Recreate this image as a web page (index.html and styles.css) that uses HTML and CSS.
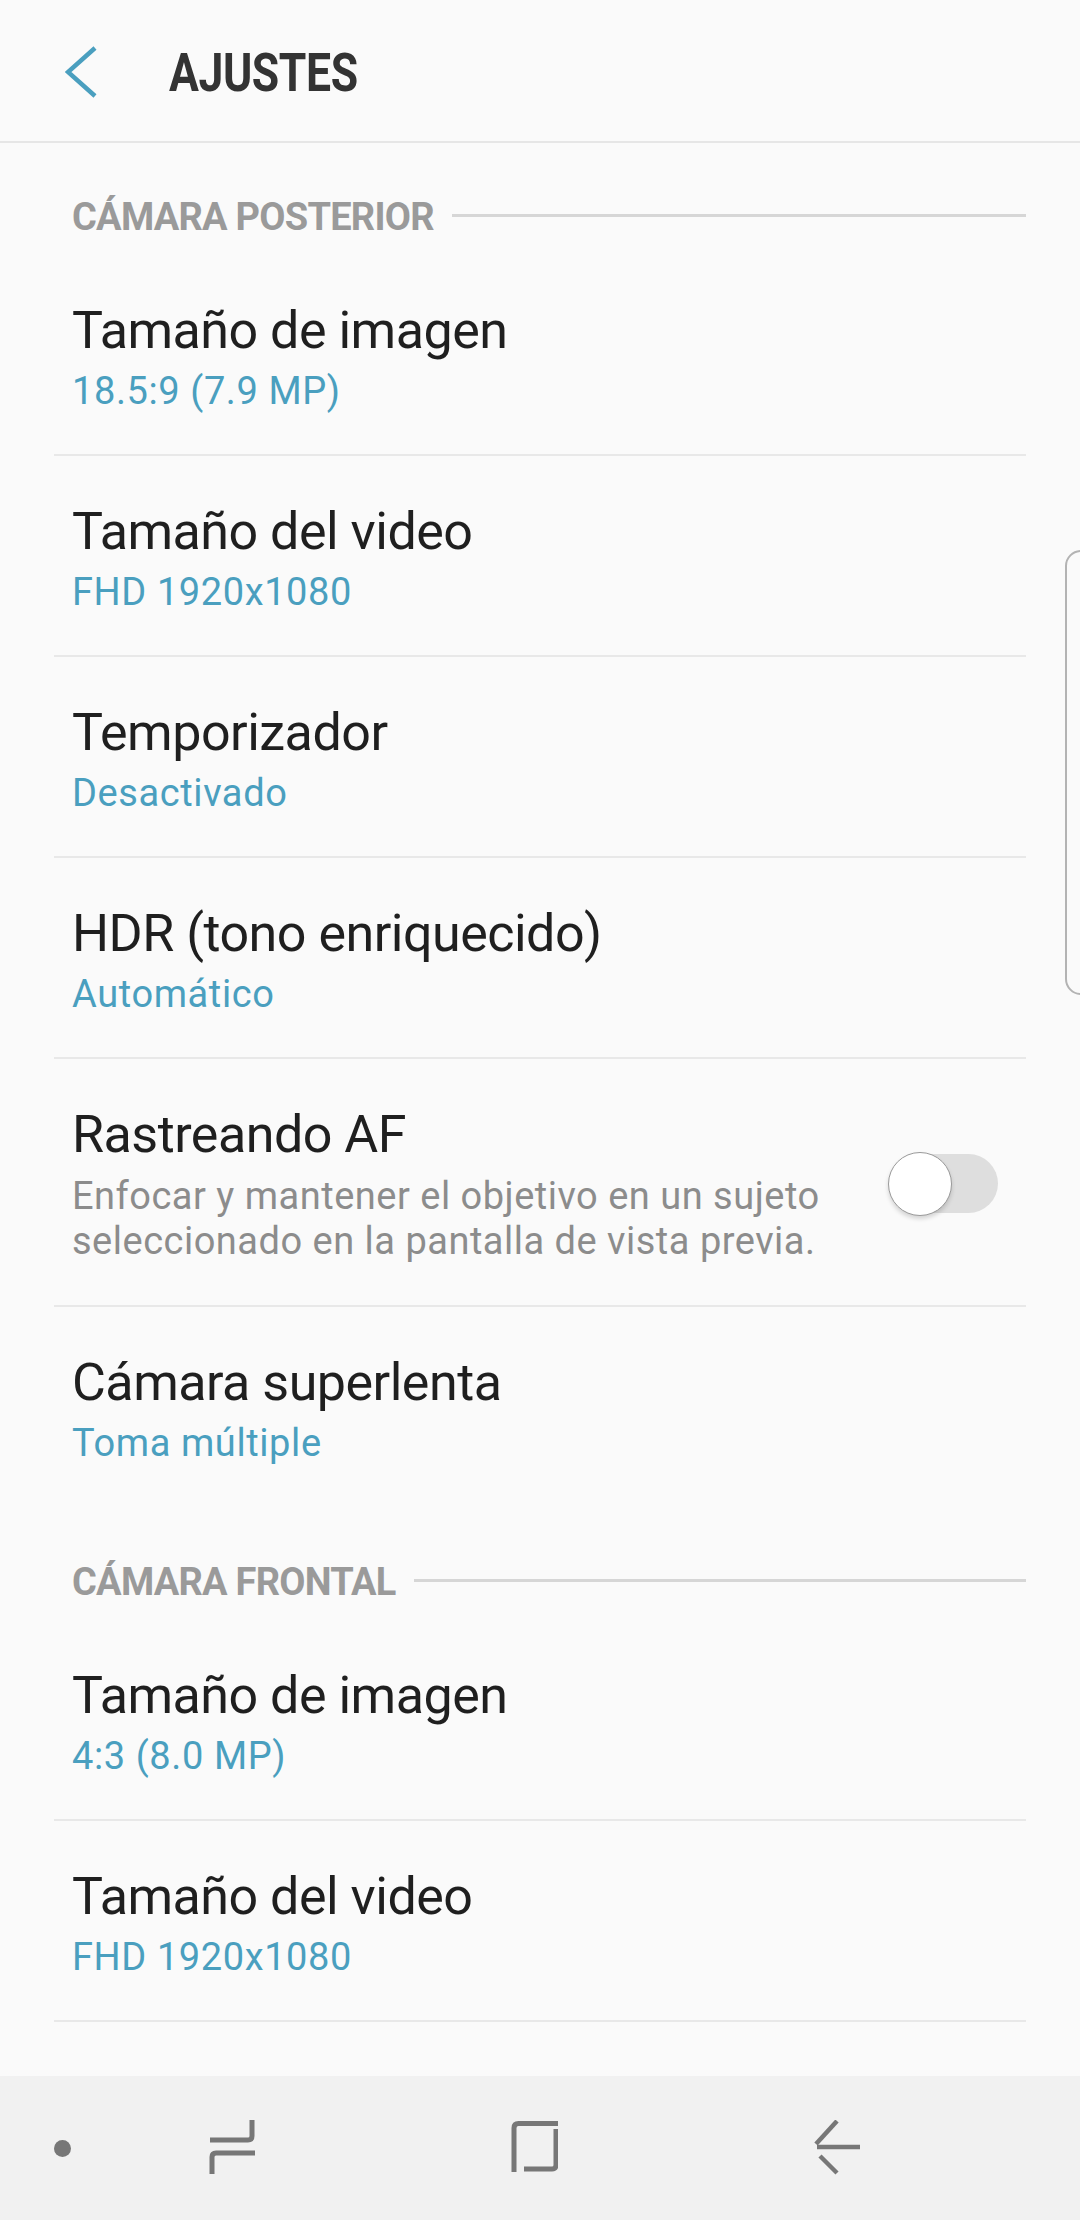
FILE: index.html
```html
<!DOCTYPE html>
<html lang="es">
<head>
  <meta charset="UTF-8">
  <title>Ajustes</title>
  <link rel="stylesheet" href="styles.css">
</head>
<body>

  <div class="screen">
    <header class="topbar">
      <svg class="back" width="32" height="52" viewBox="0 0 32 52">
        <path d="M30 2 L3 26 L30 50" fill="none" stroke="#4a9fbf" stroke-width="4.5"/>
      </svg>
      <h1><span>AJUSTES</span></h1>
    </header>

    <div class="content">
      <div class="section-title"><span>CÁMARA POSTERIOR</span></div>

      <div class="item">
        <div class="item-title">Tamaño de imagen</div>
        <div class="item-value">18.5:9 (7.9 MP)</div>
      </div>
      <div class="item">
        <div class="item-title">Tamaño del video</div>
        <div class="item-value">FHD 1920x1080</div>
      </div>
      <div class="item">
        <div class="item-title">Temporizador</div>
        <div class="item-value">Desactivado</div>
      </div>
      <div class="item">
        <div class="item-title">HDR (tono enriquecido)</div>
        <div class="item-value">Automático</div>
      </div>
      <div class="item item-switch">
        <div class="item-text">
          <div class="item-title">Rastreando AF</div>
          <div class="item-desc">Enfocar y mantener el objetivo en un sujeto seleccionado en la pantalla de vista previa.</div>
        </div>
        <div class="switch"><div class="knob"></div></div>
      </div>
      <div class="item last">
        <div class="item-title">Cámara superlenta</div>
        <div class="item-value">Toma múltiple</div>
      </div>

      <div class="section-title"><span>CÁMARA FRONTAL</span></div>

      <div class="item">
        <div class="item-title">Tamaño de imagen</div>
        <div class="item-value">4:3 (8.0 MP)</div>
      </div>
      <div class="item">
        <div class="item-title">Tamaño del video</div>
        <div class="item-value">FHD 1920x1080</div>
      </div>
    </div>

    <!-- indicador de scroll a la derecha -->
    <div class="scroll-handle"></div>

    <nav class="navbar">
      <div class="nav-dot"></div>
      <svg class="nav-icon recent" width="48" height="56" viewBox="0 0 48 56">
        <path d="M2 20 H40 Q44 20 44 16 V0" fill="none" stroke="#777" stroke-width="5"/>
        <path d="M47 33 H8 Q4 33 4 37 V54" fill="none" stroke="#777" stroke-width="5"/>
      </svg>
      <svg class="nav-icon home" width="48" height="56" viewBox="0 0 48 56">
        <path d="M4 52 V8 Q4 3.5 8.5 3.5 H50" fill="none" stroke="#777" stroke-width="5"/>
        <path d="M46 9 V45 Q46 49 42 49 H14" fill="none" stroke="#777" stroke-width="5"/>
      </svg>
      <svg class="nav-icon backkey" width="48" height="56" viewBox="0 0 48 56">
        <path d="M25 1 L4 24" fill="none" stroke="#777" stroke-width="4.5"/>
        <path d="M5 27 H49" fill="none" stroke="#777" stroke-width="4.5"/>
        <path d="M8 36 L25 53" fill="none" stroke="#777" stroke-width="4.5"/>
      </svg>
    </nav>
  </div>

</body>
</html>
```

FILE: styles.css
```css
body {
  margin: 0;
  padding: 0;
  background: #fafafa;
  font-family: Roboto, "Noto Sans", Arial, sans-serif;
  color: #1f1f1f;
}

.screen {
  width: 1080px;
  height: 2220px;
  display: flex;
  flex-direction: column;
  position: relative;
  overflow: hidden;
}

.topbar {
  height: 141px;
  border-bottom: 2px solid #e6e6e6;
  display: flex;
  align-items: center;
  flex-shrink: 0;
}

.topbar .back {
  margin-left: 65px;
  margin-top: 2px;
}

.topbar h1 {
  margin: 0 0 0 72px;
  padding-top: 4px;
  font-size: 53px;
  font-weight: bold;
  color: #333;
  line-height: 60px;
}

.topbar h1 span {
  display: inline-block;
  transform: scaleX(0.84);
  transform-origin: left center;
  letter-spacing: -0.5px;
}

.content {
  flex: 1;
}

.section-title {
  height: 112px;
  box-sizing: border-box;
  padding: 52px 54px 0 72px;
  display: flex;
  align-items: flex-start;
}

.section-title span {
  font-size: 38px;
  line-height: 44px;
  font-weight: bold;
  color: #9a9a9a;
  letter-spacing: -0.75px;
  white-space: nowrap;
}

.section-title::after {
  content: "";
  flex: 1;
  height: 3px;
  background: #d6d6d6;
  margin: 19px 0 0 18px;
}

.item {
  margin: 0 54px;
  padding: 44px 18px 35px;
  border-bottom: 2px solid #e8e8e8;
}

.item.last {
  border-bottom-color: transparent;
}

.item-title {
  font-size: 52px;
  line-height: 64px;
  letter-spacing: -0.5px;
  color: #1f1f1f;
}

.item-value {
  font-size: 38px;
  line-height: 56px;
  letter-spacing: 0.6px;
  color: #4a9fbf;
}

.item-switch {
  display: flex;
  align-items: center;
  padding-bottom: 41px;
}

.item-text {
  flex: 1;
}

.item-desc {
  margin-top: 7px;
  font-size: 38px;
  line-height: 45px;
  letter-spacing: 0.5px;
  color: #8c8c8c;
}

.switch {
  width: 110px;
  height: 64px;
  margin: 0 10px 0 40px;
  display: flex;
  align-items: center;
  justify-content: flex-end;
  position: relative;
}

.switch::before {
  content: "";
  width: 94px;
  height: 59px;
  border-radius: 30px;
  background: #dedede;
}

.knob {
  position: absolute;
  left: 0;
  top: 0;
  width: 62px;
  height: 62px;
  border-radius: 50%;
  background: #fff;
  border: 1px solid #9a9a9a;
  box-shadow: 0 3px 4px rgba(0,0,0,0.15);
}

.scroll-handle {
  position: absolute;
  left: 1065px;
  top: 550px;
  width: 40px;
  height: 441px;
  border: 2px solid #b3b3b3;
  border-radius: 16px;
}

.navbar {
  height: 144px;
  flex-shrink: 0;
  background: #f1f1f1;
  display: flex;
  align-items: center;
}

.nav-dot {
  width: 17px;
  height: 17px;
  border-radius: 50%;
  background: #777;
  margin-left: 54px;
  margin-right: 137px;
}

.nav-icon.home {
  margin-left: 254px;
}

.nav-icon.backkey {
  margin-left: 254px;
}
```
